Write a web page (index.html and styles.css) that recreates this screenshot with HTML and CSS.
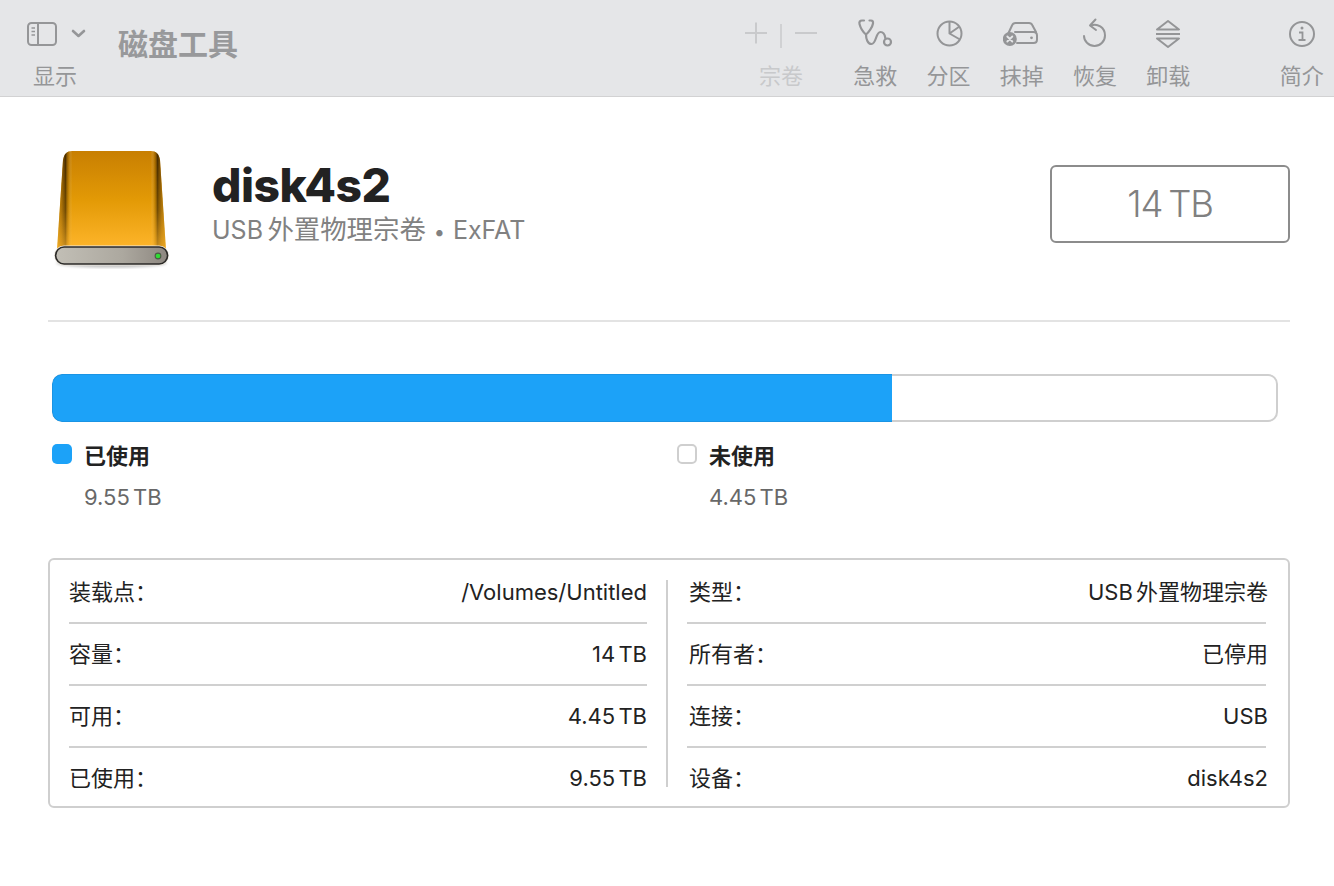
FILE: index.html
```html
<!DOCTYPE html>
<html lang="zh">
<head>
<meta charset="utf-8">
<title>磁盘工具</title>
<link rel="stylesheet" href="styles.css">
</head>
<body>
<header class="toolbar">
  <div class="tool tool-view">
    <div class="tool-icon">
      <svg width="60" height="30" viewBox="0 0 60 30" fill="none" stroke="#959698" stroke-width="2"><rect x="1" y="4" width="28" height="22" rx="3.5"/><path d="M11 4v22"/><path d="M4.500 9h3.500M4.500 12.500h3.500M4.500 16h3.500" stroke-width="1.500"/><path d="M46 12l5.500 5 5.500-5" stroke-width="2.600" stroke-linecap="round" stroke-linejoin="round"/></svg>
    </div>
    <span class="tool-label">显示</span>
  </div>
  <h1 class="app-title">磁盘工具</h1>
  <div class="tool tool-volume is-off">
    <div class="tool-icon">
      <svg width="74" height="30" viewBox="0 0 74 30" fill="none" stroke="#c9cacc" stroke-width="2"><path d="M1 14h22M12 3.500v21M51 14h22"/><path d="M37 5v24" stroke-width="1.500"/></svg>
    </div>
    <span class="tool-label">宗卷</span>
  </div>
  <div class="tool-group">
    <div class="tool">
      <div class="tool-icon">
        <svg width="36" height="30" viewBox="-0.500 1 36 30" fill="none" stroke="#949597" stroke-width="2.200" stroke-linecap="round"><path d="M6.500 2.500H4.500C2.500 2.500 1.500 4 2 6c1 4 3.500 8 6.500 10.500C11 14.500 15 9 15.500 5.500 15.800 3.500 15 2.500 13.500 2.500h-1.500"/><path d="M8.500 16.500c0 4 1.500 9.500 5.500 9.500 5 0 4-12 9-12 3.500 0 4.500 4 4.800 6"/><circle cx="30" cy="24" r="3.500"/></svg>
      </div>
      <span class="tool-label">急救</span>
    </div>
    <div class="tool">
      <div class="tool-icon">
        <svg width="30" height="30" viewBox="-1.500 0.500 30 30" fill="none" stroke="#949597" stroke-width="2" stroke-linejoin="round"><circle cx="15" cy="15" r="12"/><path d="M15 3v12l10.500 6M15 15l10-7" /></svg>
      </div>
      <span class="tool-label">分区</span>
    </div>
    <div class="tool">
      <div class="tool-icon">
        <svg width="38" height="30" viewBox="0 0 38 30" fill="none" stroke="#949597" stroke-width="2" stroke-linecap="round"><path d="M5.500 14L9 6.500Q10 4 12.500 4H26Q28.500 4 29.500 6.500L33 13"/><path d="M12 13H30.500Q34 13 34 16.500V20.500Q34 24 30.500 24H14"/><circle cx="28.500" cy="18.800" r="1.400" fill="#949597" stroke="none"/><circle cx="6.800" cy="20" r="7" fill="#949597" stroke="none"/><path d="M4.300 17.500l5 5M9.300 17.500l-5 5" stroke="#e5e6e8" stroke-width="1.800"/></svg>
      </div>
      <span class="tool-label">抹掉</span>
    </div>
    <div class="tool">
      <div class="tool-icon">
        <svg width="28" height="32" viewBox="0 0 28 32" fill="none" stroke="#949597" stroke-width="2" stroke-linecap="round" stroke-linejoin="round"><path d="M10 7.500c6-2.500 14 1.500 14 10 0 6-5 10.500-10.500 10.500S3 23.500 3 18"/><path d="M14.500 1.500L9 7.500l6 4.500"/></svg>
      </div>
      <span class="tool-label">恢复</span>
    </div>
    <div class="tool">
      <div class="tool-icon">
        <svg width="28" height="32" viewBox="0 0 28 32" fill="none" stroke="#949597" stroke-width="2" stroke-linejoin="round"><path d="M3 11.500L14 3l11 8.500zM3 20.500L14 29l11-8.500zM2 16h24"/></svg>
      </div>
      <span class="tool-label">卸载</span>
    </div>
  </div>
  <div class="tool tool-info">
    <div class="tool-icon">
      <svg width="28" height="28" viewBox="0 0 28 28" fill="none" stroke="#949597" stroke-width="2"><circle cx="14" cy="14" r="12"/><circle cx="14" cy="8" r="1.500" fill="#949597" stroke="none"/><path d="M11 12.500h3.500v7M10.500 20h7" stroke-width="1.800"/></svg>
    </div>
    <span class="tool-label">简介</span>
  </div>
</header>

<main class="content">
  <section class="disk-head">
    <svg class="disk-icon" width="118" height="120" viewBox="0 0 118 120">
      <defs>
        <linearGradient id="bodyV" x1="0" y1="0" x2="0" y2="1"><stop offset="0" stop-color="#c87f02"/><stop offset=".5" stop-color="#e39a06"/><stop offset="1" stop-color="#ffb62c"/></linearGradient>
        <linearGradient id="bodyH" x1="0" y1="0" x2="1" y2="0"><stop offset="0" stop-color="#c8901a" stop-opacity=".9"/><stop offset=".04" stop-color="#8a5a08" stop-opacity=".8"/><stop offset=".078" stop-color="#2e1c00" stop-opacity=".85"/><stop offset=".105" stop-color="#7a5000" stop-opacity=".35"/><stop offset=".14" stop-color="#fff" stop-opacity="0"/><stop offset=".86" stop-color="#fff" stop-opacity="0"/><stop offset=".895" stop-color="#7a5000" stop-opacity=".35"/><stop offset=".922" stop-color="#2e1c00" stop-opacity=".85"/><stop offset=".96" stop-color="#8a5a08" stop-opacity=".8"/><stop offset="1" stop-color="#c8901a" stop-opacity=".9"/></linearGradient>
        <linearGradient id="fade" x1="0" y1="0" x2="0" y2="1"><stop offset="0" stop-color="#fff"/><stop offset=".6" stop-color="#fff" stop-opacity=".75"/><stop offset="1" stop-color="#fff" stop-opacity=".3"/></linearGradient>
        <mask id="edgeFade"><rect width="118" height="100" fill="url(#fade)"/></mask>
        <linearGradient id="plate" x1="0" y1="0" x2="1" y2="0"><stop offset="0" stop-color="#c2bfb6"/><stop offset=".6" stop-color="#aca89f"/><stop offset="1" stop-color="#8d8780"/></linearGradient>
        <filter id="soft"><feGaussianBlur stdDeviation="1.500"/></filter>
      </defs>
      <ellipse cx="57.500" cy="113" rx="55" ry="4.500" fill="#000" opacity=".25" filter="url(#soft)"/>
      <path d="M18 1H97c5 0 8 3 9 9l6 90H3l6-90c1-6 4-9 9-9z" fill="url(#bodyV)"/>
      <path d="M18 1H97c5 0 8 3 9 9l6 90H3l6-90c1-6 4-9 9-9z" fill="url(#bodyH)" mask="url(#edgeFade)"/>
      <rect x="0" y="95.500" width="115" height="20" rx="10" fill="#eeeae2"/>
      <rect x="1.600" y="97" width="112" height="17" rx="8.500" fill="url(#plate)" stroke="#2b2a28" stroke-width="1.600"/>
      <circle cx="104" cy="106" r="3.400" fill="#4b5a45"/>
      <circle cx="104" cy="106" r="2.300" fill="#2fdc33"/>
    </svg>
    <div class="disk-title">
      <h2 class="disk-name">disk4s2</h2>
      <p class="disk-sub"><span class="sub-latin">USB</span> 外置物理宗卷 <span class="sub-dot">•</span> <span class="sub-latin">ExFAT</span></p>
    </div>
    <div class="size-box">14 TB</div>
  </section>

  <hr class="divider">

  <section class="usage">
    <div class="bar"><div class="bar-fill" style="width:68.5%"></div></div>
    <div class="legend">
      <div class="legend-item">
        <span class="swatch swatch-used"></span>
        <div class="legend-text">
          <strong class="legend-name">已使用</strong>
          <span class="legend-value">9.55 TB</span>
        </div>
      </div>
      <div class="legend-item">
        <span class="swatch swatch-free"></span>
        <div class="legend-text">
          <strong class="legend-name">未使用</strong>
          <span class="legend-value">4.45 TB</span>
        </div>
      </div>
    </div>
  </section>

  <section class="info">
    <dl class="info-col">
      <div class="info-row"><dt>装载点：</dt><dd>/Volumes/Untitled</dd></div>
      <div class="info-row"><dt>容量：</dt><dd>14 TB</dd></div>
      <div class="info-row"><dt>可用：</dt><dd>4.45 TB</dd></div>
      <div class="info-row"><dt>已使用：</dt><dd>9.55 TB</dd></div>
    </dl>
    <div class="info-sep"></div>
    <dl class="info-col info-col-right">
      <div class="info-row"><dt>类型：</dt><dd>USB 外置物理宗卷</dd></div>
      <div class="info-row"><dt>所有者：</dt><dd>已停用</dd></div>
      <div class="info-row"><dt>连接：</dt><dd>USB</dd></div>
      <div class="info-row"><dt>设备：</dt><dd>disk4s2</dd></div>
    </dl>
  </section>
</main>
</body>
</html>
```
FILE: styles.css
```css
* { box-sizing: border-box; }
html, body { margin: 0; padding: 0; }
body {
  width: 1334px;
  height: 886px;
  overflow: hidden;
  background: #fff;
  color: #222;
  font-family: Inter, "Noto Sans CJK SC", sans-serif;
}
.toolbar {
  height: 97px;
  background: #e5e6e8;
  border-bottom: 1px solid #d2d2d3;
  display: flex;
  align-items: flex-start;
  padding-top: 18px;
}
.tool {
  width: 73.300px;
  display: flex;
  flex-direction: column;
  align-items: center;
  flex: none;
}
.tool-icon {
  height: 32px;
  display: flex;
  align-items: center;
  justify-content: center;
}
.tool-label {
  margin-top: 11px;
  font-size: 22px;
  line-height: 30px;
  color: #959698;
  white-space: nowrap;
}
.tool-view {
  width: 60px;
  margin-left: 27px;
  align-items: flex-start;
}
.tool-view .tool-label { margin-left: 6px; }
.app-title {
  margin: 7px 0 0 31px;
  width: 120px;
  flex: none;
  font-size: 30px;
  line-height: 38px;
  font-weight: 700;
  color: #98999b;
  white-space: nowrap;
}
.tool-volume { margin-left: 506px; width: 74px; }
.is-off .tool-label { color: #c8c9cb; }
.tool-group { display: flex; margin-left: 20.500px; }
.tool-info { margin-left: 60px; }

.content { padding: 0 44px 0 48px; }
.disk-head {
  height: 223px;
  display: flex;
  align-items: flex-start;
}
.disk-icon { flex: none; margin: 53px 0 0 6px; }
.disk-title { margin-left: 40px; flex: 1; padding-top: 62px; }
.disk-name {
  margin: 0;
  font-size: 46.200px;
  line-height: 52px;
  font-weight: 800;
  letter-spacing: -0.500px;
  color: #222;
}
.disk-sub {
  margin: 2px 0 0;
  font-size: 26.400px;
  line-height: 32px;
  color: #818181;
  word-spacing: -3px;
  white-space: nowrap;
}
.sub-latin { font-size: 25px; }
.sub-dot { font-size: 20px; margin: 0 3.500px; }
.size-box {
  width: 240px;
  height: 78px;
  margin-top: 68px;
  border: 2px solid #8c8c8c;
  border-radius: 6px;
  display: flex;
  align-items: center;
  justify-content: center;
  font-size: 36.500px;
  font-weight: 300;
  color: #808080;
  letter-spacing: -1.200px;
  word-spacing: -3px;
}
.divider {
  margin: 0;
  border: 0;
  height: 2px;
  background: #e3e3e3;
}
.usage { padding: 52px 12px 0 4px; }
.bar {
  height: 48px;
  border-radius: 10px;
  box-shadow: inset 0 0 0 2px #cfcfcf;
  overflow: hidden;
}
.bar-fill {
  height: 48px;
  background: #1ca2f8;
  border: 1px solid #1a94e4;
  border-right: 0;
  border-radius: 10px 0 0 10px;
}
.legend {
  display: flex;
  margin-top: 20px;
}
.legend-item { width: 625px; display: flex; align-items: flex-start; flex: none; }
.swatch {
  width: 20px;
  height: 20px;
  margin-top: 2px;
  border-radius: 5px;
  flex: none;
}
.swatch-used { background: #1ca2f8; }
.swatch-free { background: #fff; border: 2px solid #cfcfcf; }
.legend-text {
  margin-left: 13px;
  display: flex;
  flex-direction: column;
  gap: 13px;
}
.legend-name {
  font-size: 22px;
  line-height: 28px;
  font-weight: 700;
  color: #222;
  margin-left: -1px;
}
.legend-value {
  font-size: 22px;
  line-height: 28px;
  color: #686868;
  word-spacing: -3px;
  margin-left: -1px;
}
.info {
  width: 1242px;
  height: 250px;
  margin-top: 47px;
  border: 2px solid #cfcfcf;
  border-radius: 6px;
  display: flex;
  padding: 2px 20px 0 19px;
}
.info-col {
  flex: none;
  width: 578px;
  margin: 0;
  padding: 0;
}
.info-col-right { width: 581px; }
.info-row {
  height: 62px;
  padding-top: 15px;
  display: flex;
  align-items: baseline;
  justify-content: space-between;
  border-bottom: 2px solid #d0d0d0;
  font-size: 22px;
  line-height: 30px;
  color: #222;
  word-spacing: -3px;
}
.info-col-right .info-row { margin-right: 2px; padding-left: 2px; }
.info-col-right .info-row dd { margin-right: -2px; }
.info-row:last-child { border-bottom: 0; }
.info-row dt, .info-row dd { margin: 0; white-space: nowrap; }
.info-sep {
  width: 2px;
  height: 207px;
  margin: 18px 19px 0;
  background: #cfcfcf;
  flex: none;
}
```
